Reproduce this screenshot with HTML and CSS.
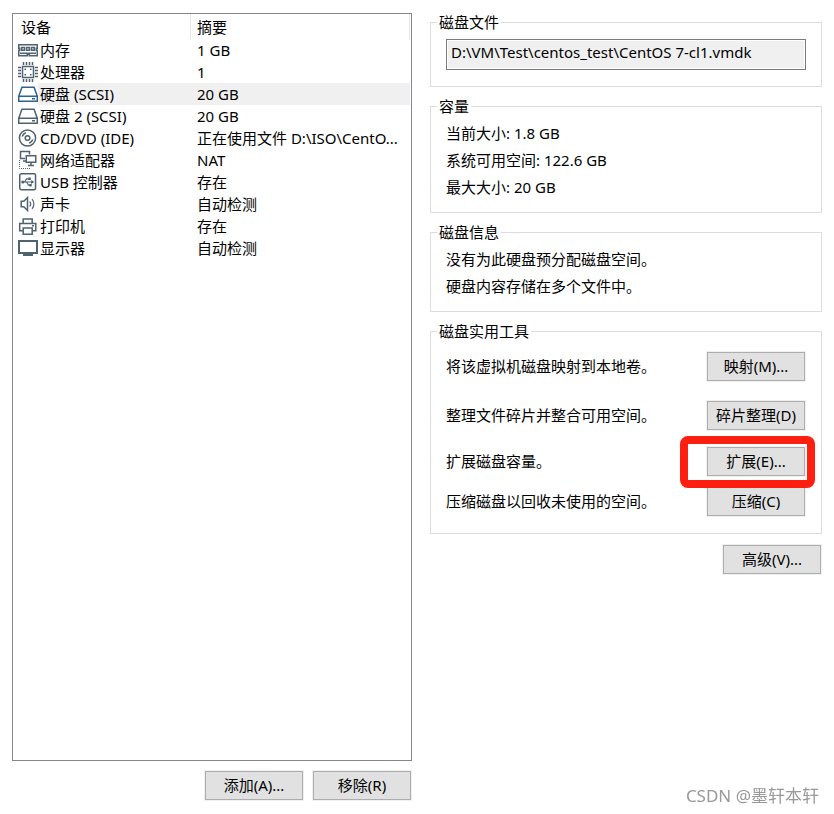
FILE: index.html
```html
<!DOCTYPE html>
<html lang="zh-CN">
<head>
    <meta charset="UTF-8">
    <meta name="viewport" content="width=device-width, initial-scale=1.0">
    <title>虚拟机设置</title>
    <link rel="stylesheet" href="styles.css">
</head>
<body>
    <main class="settings">
        <section class="devices">
            <div class="device-list">
                <table>
                    <colgroup><col class="col-icon"><col class="col-name"><col></colgroup>
                    <thead>
                        <tr><th class="head-device" colspan="2">设备</th><th class="head-summary">摘要</th></tr>
                    </thead>
                    <tbody>
                        <tr>
                            <td class="icon"><svg viewBox="0 0 20 20"><path d="M.75 4.75h18.5v3.5h-1v2h1v5.5h-8v-1.5h-2v1.5H.75v-5.5h1v-2h-1z"/><path d="M3.7 7.5h2.8v2.8H3.7zM8.6 7.5h2.8v2.8H8.6zM13.5 7.5h2.8v2.8h-2.8zM2 13.2h16"/></svg></td>
                            <td>内存</td><td>1 GB</td>
                        </tr>
                        <tr>
                            <td class="icon"><svg viewBox="0 0 20 20"><rect x="4.5" y="4.5" width="11" height="11"/><path d="M5.5 0v3M8.5 0v3M11.5 0v3M14.5 0v3M5.5 17v3M8.5 17v3M11.5 17v3M14.5 17v3M0 5.5h3M0 8.5h3M0 11.5h3M0 14.5h3M17 5.5h3M17 8.5h3M17 11.5h3M17 14.5h3"/><path class="solid" d="M6.5 6.5H8V8H6.5zM12 6.5h1.5V8H12zM6.5 12H8v1.5H6.5zM12 12h1.5v1.5H12z"/></svg></td>
                            <td>处理器</td><td>1</td>
                        </tr>
                        <tr class="selected">
                            <td class="icon"><svg viewBox="0 0 20 20"><path d="M.75 12.25 3.9 3.25h12.2l3.15 9v5H.75zM.75 12.25h18.5M14 14.8h3"/></svg></td>
                            <td>硬盘 (SCSI)</td><td>20 GB</td>
                        </tr>
                        <tr>
                            <td class="icon"><svg viewBox="0 0 20 20"><path d="M.75 12.25 3.9 3.25h12.2l3.15 9v5H.75zM.75 12.25h18.5M14 14.8h3"/></svg></td>
                            <td>硬盘 2 (SCSI)</td><td>20 GB</td>
                        </tr>
                        <tr>
                            <td class="icon"><svg viewBox="0 0 20 20"><circle cx="9.5" cy="10" r="8.1"/><circle cx="9.5" cy="10" r="2.3"/><path d="M4.3 8.5C4.8 6.7 6 5.4 7.8 4.8M14.7 11.5c-.5 1.8-1.7 3.1-3.5 3.7"/></svg></td>
                            <td>CD/DVD (IDE)</td><td>正在使用文件 D:\ISO\CentO...</td>
                        </tr>
                        <tr>
                            <td class="icon"><svg viewBox="0 0 20 20"><path d="M7 8.5H2.5v-7h9v3M5 11h3"/><path d="M8.25 5.75h9.5v6.5h-9.5zM13 12.5v3M10 15.5h6"/><path class="dots" d="M1.5 10v8.5H13"/></svg></td>
                            <td>网络适配器</td><td>NAT</td>
                        </tr>
                        <tr>
                            <td class="icon"><svg viewBox="0 0 20 20"><rect x="1.75" y="1.75" width="15.8" height="16" rx="1.5"/><path class="thin" d="M4 10h11M6.5 10l2.2-3.2h2M8.5 10l2 3.2H12"/><path class="solid" d="M13.2 8l3 2-3 2zM10.3 5.5h2.5v2.4h-2.5zM11.3 12h2.4v2.4h-2.4z"/><circle class="solid" cx="4.8" cy="10" r="1.6"/></svg></td>
                            <td>USB 控制器</td><td>存在</td>
                        </tr>
                        <tr>
                            <td class="icon"><svg viewBox="0 0 20 20"><path d="M3.2 7.2h2.6l3.7-3.7v13l-3.7-3.7H3.2z"/><path class="thin" d="M11.7 7.5c1.2 1.5 1.2 3.5 0 5M14 5.2c2.5 2.7 2.5 6.9 0 9.6"/></svg></td>
                            <td>声卡</td><td>自动检测</td>
                        </tr>
                        <tr>
                            <td class="icon"><svg viewBox="0 0 20 20"><path d="M5.2 7.5V2.9h9v4.6M5 14.8H1.7V7.5h16.1v7.3h-3.3"/><path d="M5.2 12h9v6.2h-9zM14 9.8h2"/></svg></td>
                            <td>打印机</td><td>存在</td>
                        </tr>
                        <tr>
                            <td class="icon"><svg viewBox="0 0 20 20"><path class="thick" d="M1 3h18v12H1zM5 17h10"/></svg></td>
                            <td>显示器</td><td>自动检测</td>
                        </tr>
                    </tbody>
                </table>
            </div>
            <div class="actions">
                <button type="button">添加(A)...</button>
                <button type="button">移除(R)</button>
            </div>
        </section>

        <section class="details">
            <fieldset class="file">
                <legend>磁盘文件</legend>
                <input class="path" type="text" aria-label="磁盘文件" value="D:\VM\Test\centos_test\CentOS 7-cl1.vmdk" readonly>
            </fieldset>
            <fieldset>
                <legend>容量</legend>
                <p>当前大小: 1.8 GB</p>
                <p>系统可用空间: 122.6 GB</p>
                <p>最大大小: 20 GB</p>
            </fieldset>
            <fieldset>
                <legend>磁盘信息</legend>
                <p>没有为此硬盘预分配磁盘空间。</p>
                <p>硬盘内容存储在多个文件中。</p>
            </fieldset>
            <fieldset class="tools">
                <legend>磁盘实用工具</legend>
                <div class="tool-grid">
                    <p>将该虚拟机磁盘映射到本地卷。</p>
                    <button type="button">映射(M)...</button>
                    <p>整理文件碎片并整合可用空间。</p>
                    <button type="button">碎片整理(D)</button>
                    <p>扩展磁盘容量。</p>
                    <div class="marked"><button type="button">扩展(E)...</button></div>
                    <p>压缩磁盘以回收未使用的空间。</p>
                    <button type="button">压缩(C)</button>
                </div>
            </fieldset>
            <div class="actions">
                <button type="button">高级(V)...</button>
            </div>
        </section>
    </main>
    <div class="watermark">CSDN @墨轩本轩</div>
</body>
</html>
```
FILE: styles.css
```css
* {
    box-sizing: border-box;
}
body {
    margin: 0;
    background-color: #fff;
    color: #000;
    font-family: "Noto Sans", "Noto Sans CJK SC", sans-serif;
    font-size: 15px;
    line-height: 18px;
}
.settings {
    display: grid;
    grid-template-columns: 400fr 392fr;
    gap: 18px;
    min-height: 100vh;
    padding: 13px 12px;
}
p {
    margin: 0;
    line-height: 27px;
}

/* Geräteliste */
.devices {
    display: flex;
    flex-direction: column;
}
.device-list {
    flex: 1;
    border: 1px solid #828790;
    padding-right: 1px;
}
table {
    width: 100%;
    border-collapse: separate;
    border-spacing: 0;
    table-layout: fixed;
}
.col-icon {
    width: 25px;
}
.col-name {
    width: 153px;
}
th, td {
    height: 22px;
    padding: 0 0 0 2px;
    text-align: left;
    font-weight: normal;
    white-space: nowrap;
}
th {
    height: 25px;
    border-right: 1px solid #e5e5e5;
}
.head-device {
    padding-left: 8px;
}
.head-summary, td:last-child {
    padding-left: 6px;
}
td.icon {
    padding: 0 0 0 5px;
}
.selected td:not(.icon) {
    background-color: #f0f0f0;
}
.icon svg {
    display: block;
    width: 20px;
    height: 20px;
    fill: none;
    stroke: #4f626f;
    stroke-width: 1.5;
}
.selected svg {
    stroke: #2f6291;
}
.icon .solid {
    fill: #4f626f;
    stroke: none;
}
.icon .thin {
    stroke-width: 1.2;
}
.icon .thick {
    stroke-width: 2;
}
.icon .dots {
    stroke-width: 1;
    stroke-dasharray: 1 1;
}

/* Buttons */
button {
    width: 98px;
    height: 29px;
    padding: 0 0 2px;
    border: 1px solid #adadad;
    background-color: #e1e1e1;
    box-shadow: 0 0 0 1px #f0f0f0;
    color: #000;
    font: inherit;
    white-space: nowrap;
}
.actions {
    display: flex;
    justify-content: flex-end;
    gap: 10px;
    padding: 10px 1px 1px;
}

/* Details rechts */
.details {
    display: flex;
    flex-direction: column;
    gap: 10px;
}
.details .actions {
    padding-top: 1px;
}
fieldset {
    min-width: 0;
    margin: 0;
    padding: 5px 15px 11px;
    border: 1px solid #dcdcdc;
}
legend {
    margin-left: -9px;
    padding: 0 2px;
}
.file {
    padding: 8px 15px 16px;
}
.path {
    display: block;
    width: 100%;
    height: 31px;
    padding: 0 4px 6px;
    border: 1px solid #7a7a7a;
    background-color: #f0f0f0;
    box-shadow: inset 0 0 0 1px #fff;
    color: #000;
    font: inherit;
}
.tools {
    padding: 2px 15px 13px;
}
.tool-grid {
    display: grid;
    grid-template-columns: 1fr auto;
    grid-template-rows: 49px 49px 43px 37px;
    align-items: center;
    padding-right: 1px;
}
.marked {
    position: relative;
    display: flex;
}
/* Rote Markierung um den Button */
.marked::after {
    content: "";
    position: absolute;
    inset: -11px -10px -12px -27px;
    border: 8px solid #ff1f11;
    border-radius: 8px;
    pointer-events: none;
}

.watermark {
    position: fixed;
    right: 15px;
    bottom: 6px;
    color: #999;
    font-size: 17px;
    line-height: 24px;
}
```
